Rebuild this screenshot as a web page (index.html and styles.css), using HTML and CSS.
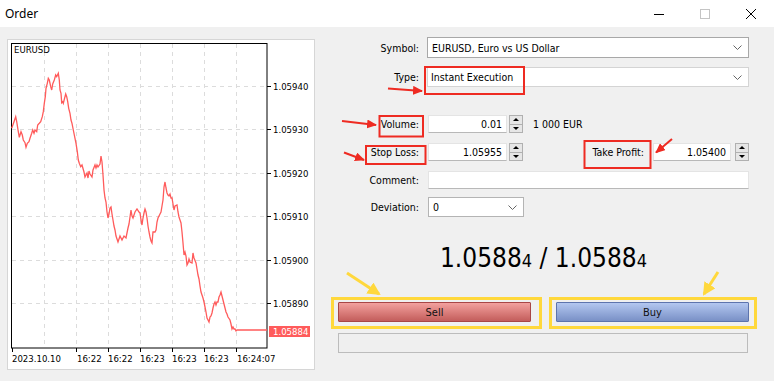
FILE: index.html
```html
<!DOCTYPE html>
<html lang="en">
<head>
    <meta charset="UTF-8">
    <title>Order</title>
    <link rel="stylesheet" href="styles.css">
</head>
<body>
<div class="window">
    <div class="titlebar">
        <span class="title">Order</span>
        <div class="controls">
            <span class="ctl"><svg width="10" height="10"><line x1="0" y1="5.5" x2="10" y2="5.5" stroke="#000" stroke-width="1"/></svg></span>
            <span class="ctl"><svg width="10" height="10"><rect x="0.5" y="0.5" width="9" height="9" fill="none" stroke="#c4c4c4"/></svg></span>
            <span class="ctl"><svg width="10" height="10"><path d="M0 0 L10 10 M10 0 L0 10" stroke="#000" stroke-width="1"/></svg></span>
        </div>
    </div>

    <div class="content">
        <div class="chart-panel">
            <svg class="chart" width="306" height="329" viewBox="8 40 306 329">
                <g class="grid">
                    <line x1="12" y1="86.5" x2="267" y2="86.5"/>
                    <line x1="12" y1="129.5" x2="267" y2="129.5"/>
                    <line x1="12" y1="173.5" x2="267" y2="173.5"/>
                    <line x1="12" y1="216.5" x2="267" y2="216.5"/>
                    <line x1="12" y1="260.5" x2="267" y2="260.5"/>
                    <line x1="12" y1="303.5" x2="267" y2="303.5"/>
                    <line x1="44.5" y1="44" x2="44.5" y2="348"/>
                    <line x1="76.5" y1="44" x2="76.5" y2="348"/>
                    <line x1="108.5" y1="44" x2="108.5" y2="348"/>
                    <line x1="140.5" y1="44" x2="140.5" y2="348"/>
                    <line x1="172.5" y1="44" x2="172.5" y2="348"/>
                    <line x1="204.5" y1="44" x2="204.5" y2="348"/>
                    <line x1="236.5" y1="44" x2="236.5" y2="348"/>
                </g>
                <rect x="11.5" y="43.5" width="255.5" height="304.5" fill="none" stroke="#000"/>
                <g class="ticks">
                    <line x1="267" y1="86.5" x2="271" y2="86.5"/>
                    <line x1="267" y1="129.5" x2="271" y2="129.5"/>
                    <line x1="267" y1="173.5" x2="271" y2="173.5"/>
                    <line x1="267" y1="216.5" x2="271" y2="216.5"/>
                    <line x1="267" y1="260.5" x2="271" y2="260.5"/>
                    <line x1="267" y1="303.5" x2="271" y2="303.5"/>
                    <line x1="12.5" y1="348" x2="12.5" y2="352"/>
                    <line x1="76.5" y1="348" x2="76.5" y2="352"/>
                    <line x1="108.5" y1="348" x2="108.5" y2="352"/>
                    <line x1="140.5" y1="348" x2="140.5" y2="352"/>
                    <line x1="172.5" y1="348" x2="172.5" y2="352"/>
                    <line x1="204.5" y1="348" x2="204.5" y2="352"/>
                    <line x1="236.5" y1="348" x2="236.5" y2="352"/>
                </g>
                <polyline class="price-line" points="11.7,128.3 14,121.7 15.7,116.7 16.7,121.7 18.3,131.7 19.3,137.3 21,131.7 22.3,135 23.3,140 25,142.7 26,147.3 27.3,143.3 29,141.7 30,138.3 31.7,133.3 32.7,130 34,133.3 35,130 36.7,131.7 37.7,125 39.3,123.3 40.7,121.7 42.3,116.7 43.3,111.7 44.3,103.3 45.3,96.7 46,88.3 47.3,83.3 48.3,78.3 49.3,80 50.7,86.7 51.7,90 52.7,84 54.3,80 55.7,75 56.7,76.7 58.3,73.3 59.3,80 60,90 61,93.3 61.7,102.7 62.7,101.7 63.3,103.3 64.3,99.3 65.7,94 66.7,96.7 67.7,101.7 68.7,108.3 70,113.3 71,120 72,123.3 73.3,130 75,138.3 76,143.3 77.3,151.7 78.3,160 79.3,163.3 80.7,166.7 82,165 84,172 85,177 87,173 88,178 89,171 90,174 92,177 93,170 95,165 96,168 97,165 98,167 100,164 101,156 102,162 103,175 104,190 105,198 106,202 107,212 108,218 109,214 110,208 111,207 112,214 113,220 114,226 115,230 116,236 118,242 120,236 122,240 124,236 126,238 128,228 129,224 131,210 132,216 133,218 135,212 137,209 139,212 140,213 141,220 142,225 143,218 144,213 145,209 146,212 147,218 148,226 149,232 150,237 151,241 152,243 153,232 155,232 156,230 157,222 158,218 160,214 161,212 162,206 163,200 164,187 165,182 166,188 167,193 168,195 169,196 170,194 171,198 172,198 173,204 174,210 175,206 177,205 178,212 179,217 180,220 181,223 182,232 183,243 184,255 185,252 186,256 187,265 188,263 189,259 190,262 192,263 193,253 194,258 196,263 197,269 198,275 199,279 200,286 201,292 202,295 203,298 204,302 205,307 206,312 207,318 208,320 209,322 210,317 211,316 212,313 213,308 214,304 215,302 216,305 217,302 218,302 219,297 220,295 221,292 222,296 223,300 224,304 226,312 227,314 228,317 230,320 231,324 232,329 233,327 234,329 235,329 236,331 237,330 267,330"/>
                <text class="sym" x="14" y="53">EURUSD</text>
                <g class="axis-y">
                    <text x="273" y="90">1.05940</text>
                    <text x="273" y="133">1.05930</text>
                    <text x="273" y="177">1.05920</text>
                    <text x="273" y="220">1.05910</text>
                    <text x="273" y="264">1.05900</text>
                    <text x="273" y="307">1.05890</text>
                </g>
                <rect x="269" y="326" width="41" height="11" fill="#ff5b5b"/>
                <text class="last" x="273" y="335">1.05884</text>
                <g class="axis-x">
                    <text x="12" y="362">2023.10.10</text>
                    <text x="77" y="362">16:22</text>
                    <text x="108" y="362">16:22</text>
                    <text x="140" y="362">16:23</text>
                    <text x="172" y="362">16:23</text>
                    <text x="204" y="362">16:23</text>
                    <text x="237" y="362">16:24:07</text>
                </g>
            </svg>
        </div>

        <div class="form">
            <div class="row row-symbol">
                <label>Symbol:</label>
                <div class="combo combo-wide">
                    <span>EURUSD, Euro vs US Dollar</span>
                    <svg class="chev" width="9" height="5"><path d="M0.5 0.5 L4.5 4.5 L8.5 0.5" fill="none" stroke="#666"/></svg>
                </div>
            </div>
            <div class="row row-type">
                <label>Type:</label>
                <div class="combo combo-wide combo-light">
                    <span>Instant Execution</span>
                    <svg class="chev" width="9" height="5"><path d="M0.5 0.5 L4.5 4.5 L8.5 0.5" fill="none" stroke="#666"/></svg>
                </div>
            </div>
            <div class="row row-volume">
                <label>Volume:</label>
                <div class="num">0.01</div>
                <div class="spin"><span class="up"></span><span class="down"></span></div>
                <span class="units">1 000 EUR</span>
            </div>
            <div class="row row-stops">
                <label>Stop Loss:</label>
                <div class="num">1.05955</div>
                <div class="spin"><span class="up"></span><span class="down"></span></div>
                <label class="tp-label">Take Profit:</label>
                <div class="num num-tp">1.05400</div>
                <div class="spin spin-tp"><span class="up"></span><span class="down"></span></div>
            </div>
            <div class="row row-comment">
                <label>Comment:</label>
                <div class="text-field"></div>
            </div>
            <div class="row row-dev">
                <label>Deviation:</label>
                <div class="combo combo-small">
                    <span>0</span>
                    <svg class="chev" width="9" height="5"><path d="M0.5 0.5 L4.5 4.5 L8.5 0.5" fill="none" stroke="#666"/></svg>
                </div>
            </div>
            <div class="quote">1.0588<small>4</small> / 1.0588<small>4</small></div>
            <div class="actions">
                <button class="btn sell">Sell</button>
                <button class="btn buy">Buy</button>
            </div>
            <div class="progress"></div>
        </div>
    </div>

    <svg class="marks" width="774" height="381">
        <defs>
            <marker id="redHead" markerWidth="10" markerHeight="9" refX="9" refY="4.5" orient="auto" markerUnits="userSpaceOnUse">
                <path d="M0 0 L10 4.5 L0 9 Z" fill="#ee2b22"/>
            </marker>
            <marker id="yellowHead" markerWidth="13" markerHeight="13" refX="11" refY="6.5" orient="auto" markerUnits="userSpaceOnUse">
                <path d="M0 0 L13 6.5 L0 13 Z" fill="#ffd83c"/>
            </marker>
        </defs>
        <g class="red-box">
            <rect x="425" y="67" width="99" height="27"/>
            <rect x="379.5" y="116" width="43.5" height="20.5"/>
            <rect x="366" y="146" width="59.5" height="18"/>
            <rect x="584.5" y="141" width="66" height="27"/>
        </g>
        <g class="red-arrow">
            <line x1="388" y1="88.5" x2="422" y2="91"/>
            <line x1="342" y1="121" x2="376" y2="125"/>
            <line x1="344" y1="152.5" x2="364" y2="160"/>
            <line x1="672" y1="139" x2="656" y2="152.5"/>
        </g>
        <g class="yellow-box">
            <rect x="332.5" y="298.5" width="208" height="29"/>
            <rect x="550.5" y="298.5" width="205" height="29"/>
        </g>
        <g class="yellow-arrow">
            <line x1="347" y1="273" x2="379" y2="294"/>
            <line x1="718" y1="272" x2="704" y2="294"/>
        </g>
    </svg>
</div>
</body>
</html>
```

FILE: styles.css
```css
* {
    box-sizing: border-box;
}
body {
    margin: 0;
    background-color: #f0f0f0;
    font-family: "DejaVu Sans Condensed", "DejaVu Sans", sans-serif;
    font-stretch: condensed;
    font-size: 10.5px;
    color: #000;
}
.window {
    position: relative;
    width: 774px;
    height: 381px;
    overflow: hidden;
}
.titlebar {
    height: 27px;
    background: #fff;
    display: flex;
    align-items: center;
    justify-content: space-between;
}
.title {
    font-family: "Noto Sans", sans-serif;
    font-stretch: normal;
    font-size: 12px;
    padding-left: 5px;
}
.controls {
    display: flex;
}
.ctl {
    width: 46px;
    height: 27px;
    display: flex;
    align-items: center;
    justify-content: center;
}
.content {
    display: flex;
    padding: 12px 0 0 7px;
}
.chart-panel {
    width: 308px;
    height: 331px;
    border: 1px solid #d6d6d6;
    background: #fff;
}
.chart {
    display: block;
}
.chart text {
    font-family: "DejaVu Sans Condensed", "DejaVu Sans", sans-serif;
    font-stretch: condensed;
    font-size: 9.5px;
    fill: #000;
}
.chart .last {
    fill: #fff;
}
.grid line {
    stroke: #dcdcdc;
    stroke-dasharray: 4 4;
    stroke-width: 1;
}
.ticks line {
    stroke: #000;
    stroke-width: 1;
}
.price-line {
    fill: none;
    stroke: #ff5b5b;
    stroke-width: 1.3;
}

/* order form */
.form {
    width: 419px;
    margin-left: 15px;
    margin-top: -2px;
    display: flex;
    flex-direction: column;
}
.row {
    display: flex;
    align-items: center;
}
.row label {
    width: 90px;
    text-align: right;
    padding-right: 1px;
    margin-right: 7px;
    flex-shrink: 0;
}
.row-symbol {
    height: 21px;
}
.row-type {
    height: 20px;
    margin-top: 9px;
}
.row-volume {
    height: 18px;
    margin-top: 28px;
}
.row-stops {
    height: 18px;
    margin-top: 10px;
}
.row-comment {
    height: 18px;
    margin-top: 10px;
}
.row-dev {
    height: 20px;
    margin-top: 8px;
}
.combo {
    height: 100%;
    display: flex;
    align-items: center;
    justify-content: space-between;
    background: #fff;
    border: 1px solid #a8a8a8;
    padding: 0 6px 0 4px;
}
.combo-wide {
    width: 322px;
}
.combo-light {
    border-color: #d4d4d4;
    padding-left: 3px;
}
.combo-small {
    width: 96px;
    margin-left: 1px;
    border-color: #b4b4b4;
}
.chev {
    display: block;
}
.num {
    width: 79px;
    height: 18px;
    margin-left: 1px;
    background: #fff;
    border: 1px solid #e4e4e4;
    border-bottom-color: #b8b8b8;
    text-align: right;
    padding-right: 4px;
    line-height: 16px;
}
.num-tp {
    width: 78px;
    margin-left: 0;
}
.spin {
    width: 14px;
    height: 18px;
    margin-left: 2px;
    display: flex;
    flex-direction: column;
}
.spin-tp {
    margin-left: 4px;
}
.spin span {
    flex: 1;
    background: #e6e6e6;
    border: 1px solid #b0b0b0;
    display: flex;
    align-items: center;
    justify-content: center;
}
.spin .up {
    border-bottom: none;
}
.spin .up::after {
    content: "";
    border-left: 3px solid transparent;
    border-right: 3px solid transparent;
    border-bottom: 3px solid #000;
}
.spin .down::after {
    content: "";
    border-left: 3px solid transparent;
    border-right: 3px solid transparent;
    border-top: 3px solid #000;
}
.units {
    margin-left: 10px;
}
.row .tp-label {
    width: auto;
    flex: 1;
    margin-right: 9px;
    padding-right: 0;
}
.text-field {
    width: 321px;
    height: 18px;
    margin-left: 1px;
    background: #fff;
    border: 1px solid #e4e4e4;
    border-bottom-color: #b8b8b8;
}
.quote {
    margin-top: 26px;
    margin-left: 8px;
    width: 411px;
    height: 30px;
    text-align: center;
    font-size: 26px;
    line-height: 30px;
}
.quote small {
    font-size: 18px;
    line-height: 1;
}
.actions {
    display: flex;
    gap: 25px;
    margin-top: 29px;
    margin-left: 8px;
}
.btn {
    width: 193px;
    height: 20px;
    font-family: inherit;
    font-stretch: condensed;
    font-size: 11px;
    color: #111;
    border-radius: 1px;
    padding: 0;
}
.sell {
    background: linear-gradient(#f3a19e, #c35d5b);
    border: 1px solid #a84646;
}
.buy {
    background: linear-gradient(#b3c7f0, #7990c6);
    border: 1px solid #5d74ad;
}
.progress {
    width: 410px;
    height: 20px;
    margin-top: 11px;
    margin-left: 8px;
    border: 1px solid #bcbcbc;
    background: #efefef;
}

/* annotation overlay */
.marks {
    position: absolute;
    top: 0;
    left: 0;
    pointer-events: none;
}
.red-box rect {
    fill: none;
    stroke: #ee2b22;
    stroke-width: 2;
}
.red-arrow line {
    stroke: #ee2b22;
    stroke-width: 2;
    marker-end: url(#redHead);
}
.yellow-box rect {
    fill: none;
    stroke: #ffd83c;
    stroke-width: 3;
}
.yellow-arrow line {
    stroke: #ffd83c;
    stroke-width: 3;
    marker-end: url(#yellowHead);
}
```
